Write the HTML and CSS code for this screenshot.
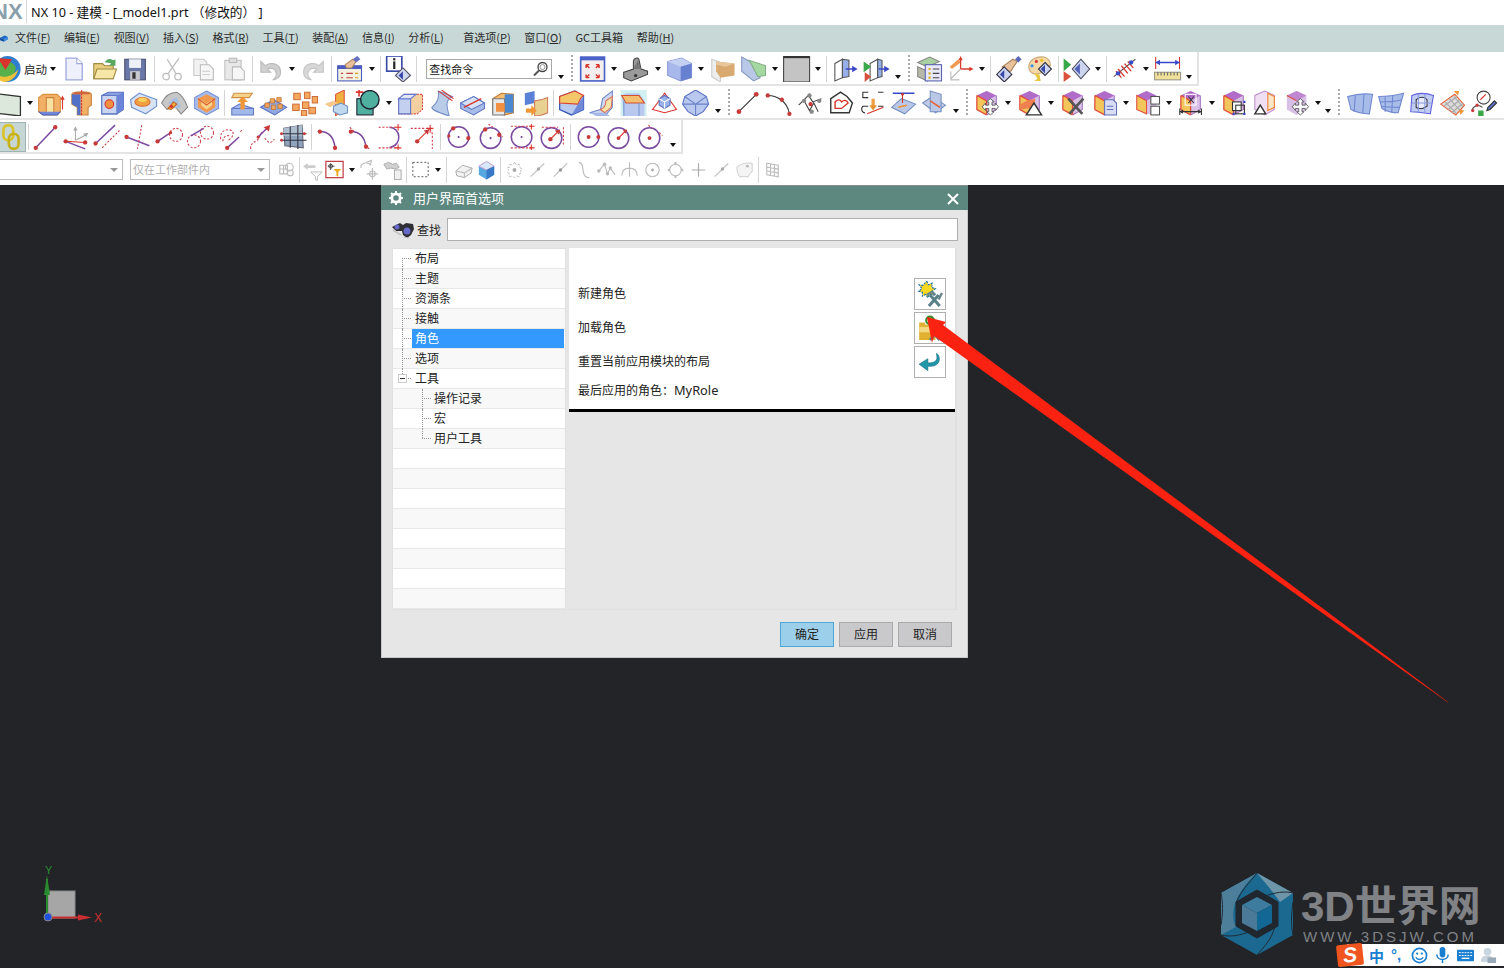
FILE: index.html
```html
<!DOCTYPE html>
<html lang="zh">
<head>
<meta charset="utf-8">
<title>NX 10 - 建模</title>
<link rel="stylesheet" href="styles.css">
</head>
<body>
<svg class="defs" aria-hidden="true">
<defs>
<g id="pcube"><path d="M12 1l9 4v13l-9 5-9-5V5z" fill="#d8bfe6"/><path d="M12 1l9 4-9 5-9-5z" fill="#b06cc8"/><path d="M3 5l9 5v13l-9-5z" fill="#f2c65a"/><path d="M3 5l9 5v13M3 5v13l9 5" fill="none" stroke="#e2503c" stroke-width="1.2"/><path d="M21 5v13l-9 5" fill="none" stroke="#a878c0"/></g>
<g id="mvx"><path d="M16 10v3h-3v-2l-3 3.500 3 3.500v-2h3v3h-2l3.500 3 3.500-3h-2v-3h3v2l3-3.500-3-3.500v2h-3v-3h2l-3.500-3-3.500 3z" fill="#fff" stroke="#555" stroke-width=".8"/></g>
</defs>
<symbol id="globe" viewBox="0 0 24 24"><circle cx="12" cy="12" r="12" fill="#2f7fd0"/><path d="M2 8c5-5 12-4 16 0 3 3 1 9-4 11-3 1-8 1-12-3z" fill="#58b04a"/><path d="M0 15c5 6 15 6 22-3-2 8-8 12-13 12-4 0-8-4-9-9z" fill="#f0c23a"/><path d="M3 2l13 1-6 10z" fill="#d8342c"/></symbol>
<symbol id="doc" viewBox="0 0 24 24"><path d="M5 2h10l5 5v15H5z" fill="#eef0fb" stroke="#a0a8dc" stroke-width="1.200"/><path d="M15 2v5h5" fill="#fff" stroke="#a0a8dc"/></symbol>
<symbol id="open" viewBox="0 0 24 24"><path d="M2 21V7h8l2 2h8v12z" fill="#e8cf80" stroke="#a08a40"/><path d="M2 21l3-9h18l-3 9z" fill="#f6e6a8" stroke="#a08a40"/><path d="M12 6c2-4 6-4 8-2l2-1v6h-6l2-2c-2-1-4-1-6-1z" fill="#58a860"/></symbol>
<symbol id="save" viewBox="0 0 24 24"><rect x="2" y="3" width="19" height="19" fill="#6a78a8" stroke="#4a5070"/><rect x="6" y="3" width="11" height="8" fill="#eef0f8"/><rect x="7" y="14" width="9" height="8" fill="#c8c8d0"/><rect x="9" y="15" width="3" height="6" fill="#333"/></symbol>
<symbol id="cut" viewBox="0 0 24 24"><path d="M7 3l8 13M18 2l-10 14" class="gl"/><circle cx="6" cy="19" r="3" class="gl"/><circle cx="17" cy="19" r="3" class="gl"/></symbol>
<symbol id="copy" viewBox="0 0 24 24"><path d="M3 3h9l3 3v12H3z" fill="#f2f2f2" stroke="#c8c8c8"/><path d="M9 8h8l4 4v10H9z" fill="#f6f6f6" stroke="#bbb"/><path d="M11 14h7M11 17h7" stroke="#ccc"/></symbol>
<symbol id="paste" viewBox="0 0 24 24"><rect x="3" y="4" width="15" height="18" fill="#e8e8e8" stroke="#c0c0c0"/><rect x="7" y="2" width="7" height="4" fill="#ddd" stroke="#bbb"/><path d="M10 10h7l4 4v8H10z" fill="#f6f6f6" stroke="#bbb"/></symbol>
<symbol id="undo" viewBox="0 0 24 24"><path d="M3 5v10h9l-3-3c4-2 7 0 8 3 1 3-1 6-3 7 5 0 8-4 7-9-1-6-9-8-14-4L4 6z" fill="#d0d0d0" stroke="#bbb"/></symbol>
<symbol id="redo" viewBox="0 0 24 24"><path d="M21 5v10h-9l3-3c-4-2-7 0-8 3-1 3 1 6 3 7-5 0-8-4-7-9 1-6 9-8 14-4l3-3z" fill="#d8d8d8" stroke="#c4c4c4"/></symbol>
<symbol id="role" viewBox="0 0 24 24"><rect x="1" y="9" width="22" height="14" fill="#f2f0e0" stroke="#4a5cc0"/><rect x="1" y="9" width="22" height="3" fill="#4a5cc0"/><path d="M4 16h2M9 16h6M4 20h2M9 20h6" stroke="#c04040"/><path d="M17 16h3M17 20h3" stroke="#d8a020"/><path d="M8 8l7-5 3 2-4 6H9z" fill="#e8c09c" stroke="#b08860"/><path d="M15 3l4-3 3 3-4 3z" fill="#6870c0"/></symbol>
<symbol id="info" viewBox="0 0 24 24"><rect x="1" y="0" width="14" height="14" fill="#fff" stroke="#3848a8" stroke-width="1.500"/><rect x="7" y="2" width="2" height="2" fill="#222"/><rect x="7" y="5" width="2" height="7" fill="#222"/><path d="M16 11l7 7-7 6-7-6z" fill="#d0d8f0" stroke="#556"/><path d="M16 14v8l-4-4z" fill="#3848a8"/></symbol>
<symbol id="fit" viewBox="0 0 24 24"><rect x="1" y="1" width="22" height="22" fill="#f4efee" stroke="#4a62c8" stroke-width="1.500"/><rect x="1" y="1" width="22" height="3" fill="#4a62c8"/><path d="M6 8l3 3M6 8h3M6 8v3M18 8l-3 3M18 8h-3M18 8v3M6 20l3-3M6 20h3M6 20v-3M18 20l-3-3M18 20h-3M18 20v-3" stroke="#d8342c" stroke-width="1.300" fill="none"/></symbol>
<symbol id="shade" viewBox="0 0 24 24"><path d="M1 15l9-3V5c0-3 4-4 5-2l2 9 6 2v3L8 23l-7-3z" fill="#9a9a9a" stroke="#444"/><path d="M10 12l7 0-3-8" fill="#777"/><circle cx="12" cy="18" r="1.500" fill="#333"/></symbol>
<symbol id="cube" viewBox="0 0 24 24"><path d="M1 5l13-3 9 5v13l-10 3-12-5z" fill="#a8b8ea" stroke="#8a9ade"/><path d="M1 5l13-3 9 5-10 3z" fill="#c4d0f2"/><path d="M13 10l10-3v13l-10 3z" fill="#6880d0"/></symbol>
<symbol id="clip" viewBox="0 0 24 24"><path d="M2 3l8 3v18l-8-5z" fill="#ededed" stroke="#ccc"/><path d="M6 5l17 2v11l-13 2-4-6z" fill="#d8aa70"/><path d="M6 5l17 2-8 3-9-2z" fill="#e8c59a"/></symbol>
<symbol id="vw" viewBox="0 0 24 24"><path d="M1 1l9 5 8 14-6 3L1 14z" fill="#b8c8e6" stroke="#8898c0"/><path d="M8 4l15 5v9l-7 1z" fill="#a4d8a0" stroke="#88b088"/></symbol>
<symbol id="bg" viewBox="0 0 24 24"><rect x="0" y="0" width="24" height="24" fill="#c4c4c4" stroke="#444"/><rect x="0" y="0" width="24" height="2" fill="#333"/></symbol>
<symbol id="mv" viewBox="0 0 24 24"><path d="M3 7l7-4v17l-7 3z" fill="#fff" stroke="#555"/><path d="M10 3l6 1v15l-6 1z" fill="#98b0e8" stroke="#555"/><path d="M13 12h8" stroke="#3848c8" stroke-width="1.500"/><path d="M19 9l5 3-5 3z" fill="#3848c8"/></symbol>
<symbol id="mv2" viewBox="0 0 24 24"><path d="M6 7l7-4v17l-7 3z" fill="#fff" stroke="#555"/><path d="M13 3l4 1v15l-4 1z" fill="#98b0e8" stroke="#555"/><path d="M14 12h6" stroke="#3848c8" stroke-width="1.500"/><path d="M19 9l5 3-5 3z" fill="#3848c8"/><path d="M0 5l7 5-7 5z" fill="#38a848"/><path d="M1 15l6 4-6 5z" fill="#d8503c"/></symbol>
<symbol id="lay" viewBox="0 0 24 24"><path d="M1 6l11-5 9 4-11 5z" fill="#a8d0a0" stroke="#888"/><path d="M1 10l9 4v9l-9-4z" fill="#b8b8a8" stroke="#888"/><rect x="8" y="8" width="15" height="15" fill="#e8e8f8" stroke="#5a62b0"/><path d="M11 11h2v2h-2zM11 15h2v2h-2zM11 19h2v2h-2z" fill="#d8b020"/><path d="M15 12h6M15 16h6M15 20h6" stroke="#444"/></symbol>
<symbol id="wcs" viewBox="0 0 24 24"><path d="M2 10l8-7 2 3-8 6z" fill="#f09a50"/><path d="M12 12h10M12 12V3" stroke="#d83c30" stroke-width="1.200"/><path d="M12 12L3 21M3 14v8h8" stroke="#bbb" fill="none"/><path d="M20 10l4 2-4 2zM10 4l2-4 2 4z" fill="#d83c30"/></symbol>
<symbol id="hd" viewBox="0 0 24 24"><path d="M6 10l10-7 4 2-6 9H8z" fill="#e8c09c" stroke="#a8845c"/><path d="M18 3l3-3 3 3-3 3z" fill="#5a68b8"/><path d="M8 10l7 7-7 7-7-7z" fill="#ccd4f0" stroke="#334"/><path d="M8 13v8l-4-4z" fill="#3848a8"/></symbol>
<symbol id="pal" viewBox="0 0 24 24"><path d="M2 10C2 3 10 0 16 1c4 1 6 4 6 8-3 0-5 3-6 6l-4 1c-5 2-10-1-10-6z" fill="#f4d8a8" stroke="#c8a870"/><circle cx="9" cy="5" r="1.500" fill="#d84040"/><circle cx="14" cy="4" r="1.500" fill="#f0c020"/><circle cx="5" cy="9" r="1.500" fill="#3890e0"/><path d="M7 16l3 5-3 2h6l-1-6z" fill="#e8c840"/><path d="M17 6l6 6-6 6-6-6z" fill="#ccd4f0" stroke="#334"/><path d="M17 8v8l-4-4z" fill="#3848a8"/></symbol>
<symbol id="pl" viewBox="0 0 24 24"><path d="M0 2l7 6-7 6z" fill="#38a848"/><path d="M0 14l7 5-7 5z" fill="#d8503c"/><path d="M16 3l8 9-8 9-8-9z" fill="#ccd4f0" stroke="#445"/><path d="M15 7v10l-5-5z" fill="#5060b8"/></symbol>
<symbol id="ant" viewBox="0 0 24 24"><path d="M2 19L22 3" stroke="#555"/><path d="M6 12l6 7M9 9l6 7M12 7l6 7M15 5l5 6M4 14l5 6" stroke="#d8342c" stroke-width="1.200"/><circle cx="6" cy="16" r="2" fill="#3848c8"/><circle cx="18" cy="6" r="2" fill="#3848c8"/></symbol>
<symbol id="rul" viewBox="0 0 24 24"><path d="M1 1v11M23 1v11" stroke="#d8342c"/><path d="M1 6h22" stroke="#3848c8" stroke-width="1.300"/><path d="M1 6l4-2.500v5zM23 6l-4-2.500v5z" fill="#3848c8"/><rect x="0" y="15" width="24" height="7" fill="#f0e09a" stroke="#998"/><path d="M3 15v3M6 15v3M9 15v3M12 15v3M15 15v3M18 15v3M21 15v3" stroke="#666"/></symbol>
<symbol id="rect" viewBox="0 0 24 24"><path d="M-4 3l26 3v18L-4 21z" fill="#dce8dc" stroke="#333" stroke-width="1.200"/></symbol>
<symbol id="ext" viewBox="0 0 24 24"><path d="M1 7l4-3h13l3 3v13l-3 3H5l-4-3z" fill="#f2b066" stroke="#d8903c"/><path d="M8 7h7v14H8z" fill="#f8e0a0" stroke="#d08038"/><path d="M1 20l4 3h13l3-3" fill="#7088d8" stroke="#4a62c0"/><path d="M23 18V8" stroke="#d8342c"/><path d="M21 9l2-4 2 4z" fill="#d8342c"/></symbol>
<symbol id="rev" viewBox="0 0 24 24"><path d="M3 4c0-3 18-3 18 0v10l-3 2v7H8v-7l-5-3z" fill="#f2b066" stroke="#c8843c"/><path d="M3 4h8v19H8v-7l-5-3z" fill="#5070c8"/><path d="M12 0v24" stroke="#d8342c" stroke-dasharray="2 1"/><path d="M4 4c0-3 16-3 16 0" fill="#d06040"/></symbol>
<symbol id="hole" viewBox="0 0 24 24"><path d="M2 5l6-3h14v16l-6 4H2z" fill="#8aa0e0" stroke="#5a70c0"/><path d="M2 5h14v17H2z" fill="#c8d4f0" stroke="#6078c8"/><path d="M16 5l6-3v16l-6 4z" fill="#6a84d8"/><circle cx="9" cy="13" r="4" fill="#f09040" stroke="#d8342c"/></symbol>
<symbol id="boss" viewBox="0 0 24 24"><path d="M0 9l8-6 16 6v6l-10 7L1 16z" fill="#d8e4f6" stroke="#7898d0" stroke-width="1.200"/><ellipse cx="11" cy="11" rx="7" ry="4" fill="#f0a040" stroke="#d87030"/><ellipse cx="11" cy="9" rx="4" ry="2" fill="#f8d060"/></symbol>
<symbol id="wedge" viewBox="0 0 24 24"><path d="M0 12C3 6 8 2 14 2c4 2 8 8 10 14l-6 6-5-6-8 2z" fill="#c8c8c8" stroke="#888"/><path d="M6 12c3-3 5-5 8-5l4 9-5 1z" fill="#a8c0e0"/><path d="M6 17l5-6 3 2-5 5z" fill="#f0b040" stroke="#c86020"/><circle cx="9" cy="15" r="1.500" fill="#d8342c"/></symbol>
<symbol id="pad" viewBox="0 0 24 24"><path d="M12 1l11 6v10l-11 6L1 17V7z" fill="#a8bce8" stroke="#7890d8"/><path d="M4 8l8-4 8 4v8l-8 5-8-5z" fill="#f09a50"/><path d="M7 9l5 4 5-4v5l-5 4-5-4z" fill="#f8d488"/><path d="M4 8l8 6 8-6" fill="none" stroke="#d85030"/></symbol>
<symbol id="up" viewBox="0 0 24 24"><path d="M4 3h17l-3 4H2z" fill="#f4d28a" stroke="#d09048"/><path d="M2 17l7-4 13 4v6H2z" fill="#a0b8ea" stroke="#6078c8"/><path d="M2 17h20" stroke="#6078c8"/><path d="M10 18v-7H7l5-5 5 5h-3v7z" fill="#f09838"/></symbol>
<symbol id="emb" viewBox="0 0 24 24"><path d="M0 16l12-7 12 7-11 7z" fill="#90a8e0" stroke="#5a70c0"/><path d="M4 12h4v4H4zM9 8h4v4H9zM15 7h4v4h-4zM10 14h4v4h-4zM16 13h4v4h-4z" fill="#f0a860" stroke="#c07030" stroke-width=".7"/></symbol>
<symbol id="pat" viewBox="0 0 24 24"><g fill="#f4a860" stroke="#c86028" stroke-width=".8"><rect x="2" y="3" width="6" height="6"/><rect x="12" y="2" width="5" height="6"/><rect x="19" y="6" width="5" height="6"/><rect x="1" y="13" width="6" height="6"/><rect x="10" y="11" width="6" height="6"/><rect x="16" y="16" width="6" height="6"/><rect x="9" y="19" width="5" height="5"/></g></symbol>
<symbol id="cross" viewBox="0 0 24 24"><path d="M12 4l8-4v17l-8 7z" fill="#f0b040" stroke="#d8342c" stroke-width=".8"/><path d="M2 13l8-3 4 2-7 4z" fill="#f4c88a"/><path d="M10 15l7-3 6 3v6l-7 2-6-3z" fill="#c0d8ee" stroke="#7090c0"/></symbol>
<symbol id="uni" viewBox="0 0 24 24"><path d="M2 2h7M5 0v6" stroke="#d8342c" stroke-width="1.500"/><rect x="3" y="8" width="15" height="15" fill="#50b0a0" stroke="#223"/><circle cx="15" cy="9" r="8.500" fill="#50b0a0" stroke="#223" stroke-width="1.300"/></symbol>
<symbol id="trim" viewBox="0 0 24 24"><path d="M1 8l5-4h17v14l-5 4H1z" fill="#f4cfa0" stroke="#d05040" stroke-dasharray="2 1"/><path d="M1 8h11v14H1z" fill="#c4d0f0" stroke="#6078d0"/><path d="M1 8l5-4h11l-5 4z" fill="#e0e6f8" stroke="#6078d0"/></symbol>
<symbol id="spl" viewBox="0 0 24 24"><path d="M9 1l13 5c-6 3-6 7-3 18-9-3-16-5-16-8C8 12 10 7 9 1z" fill="#b8cce8" stroke="#7890c8"/><path d="M9 1l13 9M12 0l11 8" stroke="#d8342c" fill="none"/></symbol>
<symbol id="sli" viewBox="0 0 24 24"><path d="M1 12l12-6 10 6v5l-10 6-12-6z" fill="#a8bce8" stroke="#6078c8"/><path d="M1 12l10 6 12-6-10-6z" fill="#d8e2f6" stroke="#6078c8"/><path d="M4 16l16-8" stroke="#d8342c" stroke-width="1.200"/></symbol>
<symbol id="shl" viewBox="0 0 24 24"><path d="M2 8l8-5 11 1v17l-8 2-11-2z" fill="#f4c070" stroke="#c87830"/><path d="M13 4h8v17h-8z" fill="#4a88d0"/><path d="M2 8h11v15H2z" fill="#e8e8e8" stroke="#777"/><path d="M5 12h8v8H5z" fill="#f09040"/></symbol>
<symbol id="off" viewBox="0 0 24 24"><path d="M3 3l9-2v11l-9 2z" fill="#5a80d8"/><path d="M12 10c4 0 8-1 12-3v14c-4 2-8 3-12 3z" fill="#e8d090" stroke="#d08060"/><path d="M4 17h5v-3l5 5-5 5v-3H4z" fill="#f09838"/></symbol>
<symbol id="bl" viewBox="0 0 24 24"><path d="M1 6l14-5 8 5v12l-11 5-11-5z" fill="#b8caf0" stroke="#3a58b8" stroke-width="1.200"/><path d="M1 6l14-5 8 4c-3 2-4 5-5 8L1 12z" fill="#f4c86a" stroke="#d84030"/><path d="M18 13l5-7v12l-11 5z" fill="#7088d8"/></symbol>
<symbol id="cham" viewBox="0 0 24 24"><path d="M0 21l10-3 2-10 9-7v15l-6 7z" fill="#d0d8f0" stroke="#7088c8"/><path d="M10 18c4-1 5-5 5-8l6-4-1 10-6 5z" fill="#f6e4a8" stroke="#d87060"/><path d="M0 21h14l5 3H6z" fill="#a4b8ea"/></symbol>
<symbol id="fla" viewBox="0 0 24 24"><rect x="0" y="0" width="24" height="24" fill="#d0f0f2"/><path d="M1 5l4-2h12l5 7v14H3z" fill="#b8c8ee"/><path d="M1 5h16l5 7H5z" fill="#f4c070" stroke="#d05030"/><path d="M3 10v14M17 12v12" stroke="#7898d0"/></symbol>
<symbol id="pyr" viewBox="0 0 24 24"><path d="M12 3L1 18l11 3 11-3z" fill="#fff" stroke="#d8342c"/><path d="M7 8l5-3 5 3v6l-5 3-5-3z" fill="#9ab0e6" stroke="#5a70c0"/><path d="M12 11v6M7 8l5 3 5-3" stroke="#fff" fill="none"/></symbol>
<symbol id="dia" viewBox="0 0 24 24"><path d="M12 0l10 6 2 7-5 7-7 4-7-4-5-7 2-7z" fill="#b8c8ee" stroke="#5a70c0"/><path d="M2 6l10 7 10-7M12 13v11M0 13l12 0 12 0" fill="none" stroke="#6a80c8"/></symbol>
<symbol id="ln" viewBox="0 0 24 24"><path d="M4 20L20 4" stroke="#333"/><circle cx="4" cy="20" r="2.200" class="pt"/><circle cx="20" cy="4" r="2.200" class="pt"/></symbol>
<symbol id="arc" viewBox="0 0 24 24"><path d="M2 5c8 0 18 5 20 17" stroke="#333" fill="none"/><circle cx="2" cy="5" r="2" class="pt"/><circle cx="15" cy="9" r="2" class="pt"/><circle cx="22" cy="22" r="2" class="pt"/></symbol>
<symbol id="sp" viewBox="0 0 24 24"><path d="M1 14l9-9 4 6 8-3M6 10l5 9 4-7 4 8" stroke="#444" fill="none"/><circle cx="6" cy="10" r="2" fill="#888"/><circle cx="11" cy="5" r="2" fill="#888"/><circle cx="12" cy="13" r="2" class="pt"/><circle cx="20" cy="10" r="2" fill="#888"/><circle cx="13" cy="20" r="2" fill="#888"/></symbol>
<symbol id="cv" viewBox="0 0 24 24"><path d="M2 8l9-6 6 4 5 6-3 9H2z" fill="#fff" stroke="#333" stroke-width="1.300"/><path d="M6 11c3-3 5-2 6 0 2-2 5-2 6 1l-6 5H6z" fill="none" stroke="#d8342c" stroke-width="1.300"/></symbol>
<symbol id="br" viewBox="0 0 24 24"><path d="M8 2H3v5h5M8 15H3c-2 2-1 6 2 6M17 2h5M17 15h5" stroke="#333" fill="none"/><path d="M11 8v7h3v-7z" fill="#f0a040"/><path d="M9 14h7l-3.500 5z" fill="#e89030"/><path d="M7 22l15-6" stroke="#d8342c"/></symbol>
<symbol id="ss" viewBox="0 0 24 24"><path d="M1 16l9-8 13 5-10 9z" fill="#b8c8e6" stroke="#7890c0"/><path d="M2 3h20" stroke="#3848c8" stroke-width="1.300"/><path d="M11 3v9" stroke="#d8342c"/><circle cx="11" cy="4" r="1.300" class="pt"/><path d="M7 16l8-2" stroke="#f09030" stroke-width="1.500"/></symbol>
<symbol id="ss2" viewBox="0 0 24 24"><path d="M1 12l9-6 12 8-9 7z" fill="#c0cce8" stroke="#7890c0"/><path d="M8 1l10 3v16L8 20z" fill="#b8c8e6" stroke="#7890c0"/><path d="M8 10l9 6" stroke="#e86030" stroke-width="1.500"/></symbol>
<symbol id="c1" viewBox="0 0 24 24"><use href="#pcube"/><use href="#mvx" transform="translate(-2 1)"/></symbol>
<symbol id="c2" viewBox="0 0 24 24"><use href="#pcube"/><path d="M4 13c5-4 10-4 13-5v8l-13 2z" fill="#f08050"/><path d="M16 12l7 11H9z" fill="#fff" stroke="#333" stroke-width="1.300"/></symbol>
<symbol id="c3" viewBox="0 0 24 24"><use href="#pcube"/><path d="M8 8l13 14M22 8L9 22" stroke="#555" stroke-width="2.500"/></symbol>
<symbol id="c4" viewBox="0 0 24 24"><use href="#pcube"/><path d="M12 9h8l3 3v11H12z" fill="#d8dcf4" stroke="#6070b8"/><path d="M14 15h6M14 18h6" stroke="#6070b8"/></symbol>
<symbol id="c5" viewBox="0 0 24 24"><path d="M11 1l9 4v18l-9-1-9-4V5z" fill="#d8bfe6"/><path d="M11 1l9 4-9 5-9-5z" fill="#b06cc8"/><path d="M2 5l9 5v12l-9-4z" fill="#f2c65a" stroke="#e2503c"/><rect x="15" y="6" width="8" height="7" fill="#fff" stroke="#555"/><rect x="15" y="15" width="8" height="8" fill="#fff" stroke="#555"/></symbol>
<symbol id="c6" viewBox="0 0 24 24"><use href="#pcube"/><path d="M2 20h20" stroke="#333" stroke-width="1.300"/><path d="M2 17v6M22 17v6" stroke="#333"/><path d="M2 20l3-2v4zM22 20l-3-2v4z" fill="#333"/><path d="M10 6l5 6M15 6l-5 6" stroke="#333"/><rect x="7" y="4" width="10" height="10" fill="none" stroke="#fff"/></symbol>
<symbol id="c7" viewBox="0 0 24 24"><use href="#pcube"/><rect x="11" y="11" width="8" height="8" fill="#fff" stroke="#333"/><rect x="14" y="14" width="8" height="8" fill="none" stroke="#333"/><path d="M11 21h2v2h-2zM21 10h2v2h-2zM21 21h2v2h-2z" fill="#3848c8"/></symbol>
<symbol id="c8" viewBox="0 0 24 24"><path d="M12 1l9 4v13l-9 5-9-5V5z" fill="#f0dff2" stroke="#c090d0"/><path d="M15 3l6 3v10l-6 3z" fill="#f8e6c8" stroke="#f08030"/><path d="M8 14l5 8H3z" fill="#fff" stroke="#333" stroke-width="1.300"/></symbol>
<symbol id="c9" viewBox="0 0 24 24"><path d="M12 1l9 4v13l-9 5-9-5V5z" fill="#d8bfe6"/><path d="M12 1l9 4-9 5-9-5z" fill="#c088d0"/><path d="M3 5l9 5" stroke="#e2503c"/><use href="#mvx" transform="translate(-2 1)"/></symbol>
<symbol id="sf1" viewBox="0 0 24 24"><path d="M1 6c7-2 15-3 23-2l-3 18c-6 0-11-1-17-4z" fill="#a8bcea" stroke="#7088d0"/><path d="M8 5l-1 15M16 4l-1 17" stroke="#7088d0"/></symbol>
<symbol id="sf2" viewBox="0 0 24 24"><path d="M1 6c8 0 15-1 23-3l-5 18c-5 0-10-1-15-4z" fill="#a8bcea" stroke="#7088d0"/><path d="M7 6l0 14M14 5l-1 16M2 11c7 0 14 0 20-2M3 15c5 1 12 1 17 1" stroke="#7088d0" fill="none"/></symbol>
<symbol id="sf3" viewBox="0 0 24 24"><path d="M3 5c7-3 14-2 20 0l-3 17c-6-1-12-2-18-2z" fill="#c0ccf0" stroke="#6060e0"/><path d="M7 16V9c3-3 8-3 10 0v6l-4 2H9z" fill="#e8ecfa" stroke="#333"/><path d="M3 12h18M9 4v16M15 4v17" stroke="#8a98e0"/></symbol>
<symbol id="sf4" viewBox="0 0 24 24"><path d="M1 13L14 4l9 10-8 9z" fill="#dcdcdc" stroke="#e86030"/><path d="M5 11l11 11M9 8l10 11M13 6l9 10M4 15L16 6M8 18l11-9M11 21L22 12" stroke="#aaa"/><path d="M13 1l5 0-1 4zM18 18l5 1-4 4z" fill="#f09838"/></symbol>
<symbol id="sf5" viewBox="0 0 24 24"><circle cx="12" cy="7" r="6" fill="#fff" stroke="#444"/><path d="M9 9l5-5" stroke="#d8342c"/><path d="M16 16l6-6 2 2-6 6-3 1z" fill="#5a70c8" stroke="#333"/><path d="M1 19c2-5 6-6 10-3" stroke="#444" fill="none"/><circle cx="2" cy="19" r="1.500" class="pt"/><circle cx="6" cy="14" r="1.500" class="pt"/><path d="M7 19h5v5H7z" fill="#38a848"/></symbol>
<symbol id="link" viewBox="0 0 24 24"><rect x="5" y="1" width="9" height="14" rx="4.500" fill="none" stroke="#d8c428" stroke-width="2.400"/><rect x="10" y="9" width="9" height="14" rx="4.500" fill="none" stroke="#c8b018" stroke-width="2.400"/></symbol>
<symbol id="l1" viewBox="0 0 24 24"><path d="M3 22L21 3" class="pu"/><circle cx="3" cy="22" r="2" class="pt"/><circle cx="21" cy="3" r="2" class="pt"/></symbol>
<symbol id="l2" viewBox="0 0 24 24"><path d="M11 15V3M11 15l10-5" stroke="#aaa" fill="none"/><path d="M9 6l2-4 2 4zM18 9l5-1-2 4z" fill="#aaa"/><path d="M2 16l18 7" class="pu"/><path d="M2 16l18 1" stroke="#d8342c"/><circle cx="2" cy="16" r="2" class="pt"/><circle cx="20" cy="17" r="2" class="pt"/></symbol>
<symbol id="l3" viewBox="0 0 24 24"><path d="M1 18L19 1" class="pu"/><path d="M7 22L23 6" class="rd"/><circle cx="1" cy="18" r="2" class="pt"/></symbol>
<symbol id="l4" viewBox="0 0 24 24"><path d="M1 12l21 8" class="pu"/><path d="M15 1l-4 22" class="rd"/><circle cx="1" cy="12" r="2" class="pt"/></symbol>
<symbol id="l5" viewBox="0 0 24 24"><path d="M1 16L13 8" class="pu"/><circle cx="18" cy="10" r="6" class="rd"/><circle cx="1" cy="16" r="2" class="pt"/><circle cx="13" cy="8" r="1.500" class="pt"/></symbol>
<symbol id="l6" viewBox="0 0 24 24"><circle cx="6" cy="16" r="6" class="rd"/><circle cx="18" cy="8" r="6" class="rd"/><path d="M3 11L15 4" class="pu"/></symbol>
<symbol id="l7" viewBox="0 0 24 24"><path d="M2 14C1 6 8 4 12 6c4 3-1 9-4 9M20 7l3-2" class="rd"/><path d="M8 22l11-10" class="pu"/><path d="M4 16c0-4 3-6 7-5" class="rd"/><circle cx="8" cy="22" r="2" class="pt"/></symbol>
<symbol id="l8" viewBox="0 0 24 24"><path d="M1 23c0-7 5-6 7-9s2-6 5-7" class="rd"/><path d="M8 12l9-9" class="pu"/><path d="M14 13l4 4c2 1 5-3 5-3" class="rd"/><path d="M13 3l6-2-1 6z" class="pt"/><circle cx="8" cy="12" r="1.500" class="pt"/></symbol>
<symbol id="l9" viewBox="0 0 24 24"><path d="M3 4l17-3 1 21-17-2z" fill="#8fa4bc" stroke="#667"/><path d="M3 4l17-3v10H3z" fill="#aebecc"/><path d="M0 9h24M1 15h23M9 2v20M16 1v22" stroke="#334"/><circle cx="1" cy="9" r="1.300" class="pt"/><circle cx="1" cy="15" r="1.300" class="pt"/><circle cx="22" cy="9" r="1.300" class="pt"/></symbol>
<symbol id="a1" viewBox="0 0 24 24"><path d="M3 7c8 0 13 5 14 15" class="pu"/><circle cx="3" cy="7" r="2" class="pt"/><circle cx="17" cy="22" r="2" class="pt"/></symbol>
<symbol id="a2" viewBox="0 0 24 24"><path d="M3 7c8 0 13 5 14 15" class="pu"/><path d="M2 3l5 5M16 19l5 5" class="rd"/><circle cx="3" cy="7" r="2" class="pt"/><circle cx="17" cy="21" r="2" class="pt"/></symbol>
<symbol id="a3" viewBox="0 0 24 24"><path d="M10 3c10 0 13 16 0 19" class="pu"/><path d="M0 3h18M0 22h18" class="rd"/><path d="M18 0v6M15 3h6M18 19v6M15 22h6" stroke="#d8342c"/></symbol>
<symbol id="a4" viewBox="0 0 24 24"><path d="M1 4h15c3 0 5 3 5 6v13" class="rd"/><path d="M7 16l11-11" stroke="#d8342c"/><path d="M13 6l5-1-1 5z" class="pt"/><circle cx="7" cy="16" r="2" class="pt"/><path d="M19 1v7M16 4h6" stroke="#d8342c"/></symbol>
<symbol id="o1" viewBox="0 0 24 24"><circle cx="12" cy="12" r="9.500" class="pu"/><path d="M11 12h2M12 11v2" stroke="#7a4aa0"/><circle cx="7" cy="4" r="2" class="pt"/><circle cx="21" cy="13" r="2" class="pt"/><circle cx="3" cy="11" r="1.500" class="pt"/></symbol>
<symbol id="o2" viewBox="0 0 24 24"><circle cx="12" cy="13" r="9.500" class="pu"/><path d="M11 13h2M12 12v2" stroke="#7a4aa0"/><path d="M10 0l4 3M20 9l3 3" class="rd"/><circle cx="7" cy="5" r="2" class="pt"/><circle cx="20" cy="10" r="2" class="pt"/></symbol>
<symbol id="o3" viewBox="0 0 24 24"><circle cx="12" cy="12" r="9.500" class="pu"/><path d="M2 2h20M2 22h20" class="rd"/><path d="M11 12h2M12 11v2" stroke="#7a4aa0"/><path d="M21 0v5M19 2h5M21 19v5M19 22h5" stroke="#d8342c"/></symbol>
<symbol id="o4" viewBox="0 0 24 24"><circle cx="11" cy="13" r="9.500" class="pu"/><path d="M2 3h15M22 3v17" class="rd"/><path d="M10 14l8-8" stroke="#d8342c"/><circle cx="10" cy="14" r="2" class="pt"/><path d="M14 6l5-1-1 5z" class="pt"/></symbol>
<symbol id="o5" viewBox="0 0 24 24"><circle cx="12" cy="12" r="9.500" class="pu"/><circle cx="12" cy="12" r="1.800" class="pt"/><circle cx="21" cy="12" r="1.800" class="pt"/></symbol>
<symbol id="o6" viewBox="0 0 24 24"><circle cx="11" cy="13" r="9.500" class="pu"/><path d="M11 13l7-7" stroke="#d8342c"/><circle cx="11" cy="13" r="1.800" class="pt"/><path d="M15 6l4-1-1 4z" class="pt"/></symbol>
<symbol id="o7" viewBox="0 0 24 24"><circle cx="11" cy="13" r="9.500" class="pu"/><circle cx="11" cy="13" r="1.800" class="pt"/><path d="M10 1l3 3M20 8l3 3" class="rd"/></symbol>
<symbol id="q1" viewBox="0 0 24 24"><path d="M6 7h8v9H6zM6 11h8M10 7v9" class="gl"/><circle cx="16" cy="9" r="4" class="gl"/><circle cx="17" cy="15" r="3" class="gl"/></symbol>
<symbol id="q2" viewBox="0 0 24 24"><path d="M1 8l5-3v2h8v3H6v2z" fill="#ccc"/><path d="M9 14h12l-5 5v4l-2-1v-3z" fill="#fff" stroke="#bbb"/></symbol>
<symbol id="q3" viewBox="0 0 24 24"><rect x="3" y="3" width="18" height="17" fill="#fff" stroke="#c04048" stroke-width="1.300"/><path d="M8 5v7M5 8h7" stroke="#444"/><circle cx="8" cy="8" r="2" fill="none" stroke="#444"/><path d="M11 11h8l-3 3v5l-2-1v-4z" fill="#f0a820"/></symbol>
<symbol id="q4" viewBox="0 0 24 24"><path d="M3 10c0-6 8-7 10-3M13 7l1-5-5 2" class="gl"/><path d="M15 10v12M9 16h12" class="gl"/><circle cx="15" cy="16" r="3" class="gl"/></symbol>
<symbol id="q5" viewBox="0 0 24 24"><path d="M3 6l5-2 4 2 4-1 3 4-3 2-6-1-4 1z" fill="#d0d0d0" stroke="#aaa"/><rect x="14" y="12" width="7" height="10" fill="#f0f0f0" stroke="#aaa"/></symbol>
<symbol id="q6" viewBox="0 0 24 24"><rect x="4" y="4" width="16" height="15" fill="none" stroke="#555" stroke-dasharray="2 2"/></symbol>
<symbol id="q7" viewBox="0 0 24 24"><path d="M4 13l7-6 10 3-1 5-7 5-8-2z" fill="#f2f2f2" stroke="#aaa"/><path d="M4 13l9 2 8-5M13 15v5" class="gl"/></symbol>
<symbol id="q8" viewBox="0 0 24 24"><path d="M4 8l8-5 8 5v9l-8 5-8-5z" fill="#58a8e0"/><path d="M4 8l8-5 8 5-8 4z" fill="#d8e8f8" stroke="#c8a0d0"/><path d="M12 12l8-4v9l-8 5z" fill="#3878c8"/></symbol>
<symbol id="q9" viewBox="0 0 24 24"><path d="M12 4l2 3 3-1v3l3 2-2 2 2 2-3 1v3l-3-1-2 2-2-2-3 1v-3l-3-2 2-2-2-2 3-1V6l3 1z" fill="none" stroke="#bbb" stroke-dasharray="3 2"/><circle cx="12" cy="12" r="2" fill="#aaa"/></symbol>
<symbol id="qa" viewBox="0 0 24 24"><path d="M5 19L19 5" class="gl"/><circle cx="13" cy="11" r="1.800" fill="#aaa"/></symbol>
<symbol id="qb" viewBox="0 0 24 24"><path d="M5 19L19 5" class="gl"/><circle cx="12" cy="12" r="1.800" fill="#999"/></symbol>
<symbol id="qc" viewBox="0 0 24 24"><path d="M7 4c5 0 4 7 5 11 1 4 3 5 6 5" class="gl"/></symbol>
<symbol id="qd" viewBox="0 0 24 24"><path d="M4 13l6-7 3 10 3-6 5 7" class="gl"/><circle cx="4" cy="13" r="1.800" fill="#bbb"/><circle cx="10" cy="6" r="1.800" fill="#bbb"/><circle cx="13" cy="16" r="1.800" fill="#bbb"/><circle cx="16" cy="10" r="1.800" fill="#bbb"/></symbol>
<symbol id="qe" viewBox="0 0 24 24"><path d="M4 18C4 12 8 10 12 10s8 2 8 8M12 4v15" class="gl"/></symbol>
<symbol id="qf" viewBox="0 0 24 24"><circle cx="12" cy="12" r="7" class="gl"/><circle cx="12" cy="12" r="1.500" fill="#aaa"/></symbol>
<symbol id="qg" viewBox="0 0 24 24"><circle cx="12" cy="12" r="6" class="gl"/><circle cx="12" cy="5" r="1.300" fill="#bbb"/><circle cx="12" cy="19" r="1.300" fill="#bbb"/><circle cx="5" cy="12" r="1.300" fill="#bbb"/><circle cx="19" cy="12" r="1.300" fill="#bbb"/></symbol>
<symbol id="qh" viewBox="0 0 24 24"><path d="M12 5v14M5 12h14" stroke="#aaa" stroke-width="1.200"/></symbol>
<symbol id="qi" viewBox="0 0 24 24"><path d="M4 9c5-4 11-5 16-4v9c-2 1-3 2-4 5H7C5 17 4 12 4 9z" fill="#f4f4f4" stroke="#ccc"/><circle cx="15" cy="8" r="1.500" fill="#bbb"/></symbol>
<symbol id="qj" viewBox="0 0 24 24"><path d="M6 5l12 2v12L6 17zM6 9l12 2M6 13l12 2M10 6v12M14 6v13" class="gl"/></symbol>
</svg>

<div class="title">
  <span class="nx">NX</span>
  <span class="titletext">NX 10 - 建模 - [_model1.prt （修改的） ]</span>
</div>
<nav class="menu">
  <svg class="menuico" viewBox="0 0 10 12"><path d="M0 7l6-3 4 2-5 3z" fill="#1c66c8"/><path d="M0 7v3l5 2v-3z" fill="#1450a0"/><path d="M5 9v3l5-3V6z" fill="#3a8ae0"/></svg>
  <span>文件(<u>F</u>)</span><span>编辑(<u>E</u>)</span><span>视图(<u>V</u>)</span><span>插入(<u>S</u>)</span><span>格式(<u>R</u>)</span><span>工具(<u>T</u>)</span><span>装配(<u>A</u>)</span><span>信息(<u>I</u>)</span><span>分析(<u>L</u>)</span><span class="mgap">首选项(<u>P</u>)</span><span>窗口(<u>O</u>)</span><span>GC工具箱</span><span>帮助(<u>H</u>)</span>
</nav>

<div class="row">
  <div class="tb">
    <svg class="b first8"><use href="#globe"/></svg><span class="start">启动</span><i class="c c10"></i>
    <svg class="b"><use href="#doc"/></svg><svg class="b"><use href="#open"/></svg><svg class="b"><use href="#save"/></svg><i class="s"></i>
    <svg class="b"><use href="#cut"/></svg><svg class="b"><use href="#copy"/></svg><svg class="b"><use href="#paste"/></svg><i class="s"></i>
    <svg class="b"><use href="#undo"/></svg><i class="c"></i><svg class="b"><use href="#redo"/></svg><i class="s"></i>
    <svg class="b"><use href="#role"/></svg><i class="c"></i><i class="s"></i><svg class="b"><use href="#info"/></svg><i class="s"></i>
    <div class="cmd"><span>查找命令</span><svg class="mag" viewBox="0 0 16 16"><circle cx="10" cy="6" r="4.500" fill="#fff" stroke="#444" stroke-width="1.300"/><circle cx="10" cy="6" r="2.500" fill="none" stroke="#999"/><path d="M6.500 9.500L1.500 14.500" stroke="#555" stroke-width="2"/></svg></div>
    <i class="c low ml3"></i><i class="g gw"></i>
    <svg class="b"><use href="#fit"/></svg><i class="c"></i><svg class="b"><use href="#shade"/></svg><i class="c"></i><svg class="b"><use href="#cube"/></svg><i class="c"></i><svg class="b"><use href="#clip"/></svg><svg class="b"><use href="#vw"/></svg><i class="c"></i><svg class="b"><use href="#bg"/></svg><i class="c"></i><i class="s"></i>
    <svg class="b"><use href="#mv"/></svg><svg class="b"><use href="#mv2"/></svg><i class="c low"></i><i class="g gw"></i>
    <svg class="b"><use href="#lay"/></svg><svg class="b"><use href="#wcs"/></svg><i class="c"></i><i class="s"></i>
    <svg class="b"><use href="#hd"/></svg><svg class="b"><use href="#pal"/></svg><i class="s"></i>
    <svg class="b"><use href="#pl"/></svg><i class="c"></i><i class="s"></i>
    <svg class="b"><use href="#ant"/></svg><i class="c"></i><svg class="b"><use href="#rul"/></svg><i class="c low"></i><i class="endpad"></i>
  </div>
</div>

<div class="row">
  <div class="tb full">
    <svg class="b first6"><use href="#rect"/></svg><i class="c c9"></i>
    <svg class="b"><use href="#ext"/></svg><svg class="b"><use href="#rev"/></svg><svg class="b"><use href="#hole"/></svg><svg class="b"><use href="#boss"/></svg><svg class="b"><use href="#wedge"/></svg><svg class="b"><use href="#pad"/></svg><i class="s"></i>
    <svg class="b"><use href="#up"/></svg><svg class="b"><use href="#emb"/></svg><svg class="b"><use href="#pat"/></svg><svg class="b"><use href="#cross"/></svg><svg class="b"><use href="#uni"/></svg><i class="c"></i>
    <svg class="b"><use href="#trim"/></svg><svg class="b"><use href="#spl"/></svg><svg class="b"><use href="#sli"/></svg><svg class="b"><use href="#shl"/></svg><svg class="b"><use href="#off"/></svg><i class="s"></i>
    <svg class="b"><use href="#bl"/></svg><svg class="b"><use href="#cham"/></svg><svg class="b"><use href="#fla"/></svg><svg class="b"><use href="#pyr"/></svg><svg class="b"><use href="#dia"/></svg><i class="c low"></i><i class="g"></i>
    <svg class="b"><use href="#ln"/></svg><svg class="b"><use href="#arc"/></svg><svg class="b"><use href="#sp"/></svg><svg class="b"><use href="#cv"/></svg><svg class="b"><use href="#br"/></svg><svg class="b"><use href="#ss"/></svg><svg class="b"><use href="#ss2"/></svg><i class="c low"></i><i class="g"></i>
    <svg class="b"><use href="#c1"/></svg><i class="c"></i><svg class="b"><use href="#c2"/></svg><i class="c"></i><svg class="b"><use href="#c3"/></svg><svg class="b"><use href="#c4"/></svg><i class="c"></i><svg class="b"><use href="#c5"/></svg><i class="c"></i><svg class="b"><use href="#c6"/></svg><i class="c"></i><svg class="b"><use href="#c7"/></svg><svg class="b"><use href="#c8"/></svg><svg class="b"><use href="#c9"/></svg><i class="c"></i><i class="c low c8"></i><i class="g gww"></i>
    <svg class="b"><use href="#sf1"/></svg><svg class="b"><use href="#sf2"/></svg><svg class="b"><use href="#sf3"/></svg><svg class="b"><use href="#sf4"/></svg><svg class="b"><use href="#sf5"/></svg>
  </div>
</div>

<div class="row">
  <div class="tb">
    <span class="active first6"><svg class="linkic"><use href="#link"/></svg></span><i class="s s4"></i>
    <svg class="b b31"><use href="#l1"/></svg><svg class="b b31"><use href="#l2"/></svg><svg class="b b31"><use href="#l3"/></svg><svg class="b b31"><use href="#l4"/></svg><svg class="b b31"><use href="#l5"/></svg><svg class="b b31"><use href="#l6"/></svg><svg class="b b31"><use href="#l7"/></svg><svg class="b b31"><use href="#l8"/></svg><svg class="b b31"><use href="#l9"/></svg><i class="s"></i>
    <svg class="b"><use href="#a1"/></svg><svg class="b"><use href="#a2"/></svg><svg class="b"><use href="#a3"/></svg><svg class="b"><use href="#a4"/></svg><i class="s"></i>
    <svg class="b"><use href="#o1"/></svg><svg class="b"><use href="#o2"/></svg><svg class="b"><use href="#o3"/></svg><svg class="b"><use href="#o4"/></svg><i class="s"></i>
    <svg class="b"><use href="#o5"/></svg><svg class="b"><use href="#o6"/></svg><svg class="b"><use href="#o7"/></svg><i class="c low"></i><i class="endpad"></i>
  </div>
</div>

<div class="row4">
  <div class="sel sel1"></div>
  <div class="sel sel2"><span>仅在工作部件内</span></div>
  <svg class="n"><use href="#q1"/></svg><i class="s"></i>
  <svg class="n"><use href="#q2"/></svg><svg class="n m2"><use href="#q3"/></svg><i class="c"></i><svg class="n"><use href="#q4"/></svg><svg class="n"><use href="#q5"/></svg><i class="s"></i>
  <svg class="n"><use href="#q6"/></svg><i class="c"></i><i class="s s8"></i>
  <svg class="n"><use href="#q7"/></svg><svg class="n"><use href="#q8"/></svg><i class="s"></i>
  <svg class="n"><use href="#q9"/></svg><svg class="n"><use href="#qa"/></svg><svg class="n"><use href="#qb"/></svg><svg class="n"><use href="#qc"/></svg><svg class="n"><use href="#qd"/></svg><svg class="n"><use href="#qe"/></svg><svg class="n"><use href="#qf"/></svg><svg class="n"><use href="#qg"/></svg><svg class="n"><use href="#qh"/></svg><svg class="n"><use href="#qa"/></svg><svg class="n"><use href="#qi"/></svg><i class="s"></i>
  <svg class="n"><use href="#qj"/></svg>
</div>

<main class="view"></main>

<section class="dialog">
  <header class="dhead">
    <svg class="gear" viewBox="0 0 14 14"><circle cx="7" cy="7" r="4.200" fill="none" stroke="#fff" stroke-width="2.800"/><path d="M7 0v2.500M7 11.500V14M0 7h2.500M11.500 7H14M2 2l1.800 1.800M10.200 10.200L12 12M12 2l-1.800 1.800M3.800 10.200L2 12" stroke="#fff" stroke-width="2"/></svg>
    <span class="dtitle">用户界面首选项</span>
    <svg class="close" viewBox="0 0 12 12"><path d="M1 1l10 10M11 1L1 11" stroke="#fff" stroke-width="2"/></svg>
  </header>
  <div class="dsearch">
    <svg class="bino" viewBox="0 0 22 18"><path d="M0 6l8-4 3 2 3-2 7 1 1 5-3 6-4 3-4-3-1-4-6 0z" fill="#2e2e34"/><circle cx="5" cy="6" r="2.500" fill="#6868c8"/><circle cx="15" cy="10" r="3.500" fill="#6868c8"/><path d="M1 9l8 5" stroke="#c4c4c4" stroke-width="2"/><path d="M12 16l5 1" stroke="#bbb"/></svg>
    <span>查找</span>
    <div class="dinput"></div>
  </div>
  <div class="dmain">
    <ul class="tree">
      <li class="t l1 first"><span>布局</span></li>
      <li class="t l1"><span>主题</span></li>
      <li class="t l1"><span>资源条</span></li>
      <li class="t l1"><span>接触</span></li>
      <li class="t l1 sel-row"><span>角色</span></li>
      <li class="t l1"><span>选项</span></li>
      <li class="t l1 last"><b class="minus"></b><span>工具</span></li>
      <li class="t l2"><span>操作记录</span></li>
      <li class="t l2"><span>宏</span></li>
      <li class="t l2 last"><span>用户工具</span></li>
      <li class="t"></li><li class="t"></li><li class="t"></li><li class="t"></li><li class="t"></li><li class="t"></li><li class="t"></li><li class="t"></li>
    </ul>
    <div class="pane">
      <div class="pane-top">
        <div class="opt"><span>新建角色</span><button class="ib"><svg viewBox="0 0 24 24"><path d="M9 0l1.500 3.500 3.500-1.500-.5 4 3.500 1-3 2.500 1 3.500-3.500-.5-1.500 3-2-3-3 1.500 0-3.500-3.500-1 3-2.500L2 3.500l3.500.5z" fill="#f8d820" stroke="#1c6ca8" stroke-dasharray="2 1"/><path d="M11 23l9-10M21 23l-9-10" stroke="#5a808a" stroke-width="2.800"/><path d="M9 13l5-3 3 3M23 11l-3 6" stroke="#66848c" stroke-width="2.200" fill="none"/></svg></button></div>
        <div class="opt"><span>加载角色</span><button class="ib"><svg viewBox="0 0 24 24"><path d="M2 10V7h5l1 2h9v14H2z" fill="#e0b030"/><path d="M2 11h15v5H2z" fill="#f4d880"/><circle cx="12" cy="5" r="3.500" fill="none" stroke="#3a8a28" stroke-width="2"/><path d="M12 23l8-9M21 23l-8-9" stroke="#5a808a" stroke-width="2.800"/></svg></button></div>
        <div class="opt"><span>重置当前应用模块的布局</span><button class="ib"><svg viewBox="0 0 24 24"><path d="M18 4c3 2 3 6 2 8-2 4-6 4-10 4v4l-8-6 8-5v4c4 0 7-1 8-3 1-2 0-4 0-6z" fill="#1c98a8" stroke="#1c6c88" stroke-width=".6"/></svg></button></div>
        <div class="opt lastopt"><span>最后应用的角色：<em class="lat">MyRole</em></span></div>
      </div>
    </div>
  </div>
  <footer class="dfoot">
    <button class="btn ok">确定</button><button class="btn">应用</button><button class="btn">取消</button>
  </footer>
</section>

<svg class="arrow" viewBox="0 0 600 420"><polygon points="7,7 26,12 23,15 528,392 528,392.600 14,26 12,33" fill="#fb2211"/></svg>

<svg class="triad" viewBox="0 0 70 70"><rect x="8" y="26" width="27" height="27" fill="#a6a6a6" stroke="#8a8a8a"/><path d="M7 53V14" stroke="#2a8a30" stroke-width="2"/><path d="M4 30l3-20 3 20z" fill="#2a8a30"/><path d="M7 52.500h40" stroke="#c83030" stroke-width="2"/><path d="M38 49.500l14 3-14 3z" fill="#c83030"/><circle cx="8" cy="52" r="4" fill="#2050e0" stroke="#888"/><text x="5" y="9" class="ty">Y</text><text x="54" y="57" class="tx">X</text></svg>

<div class="mark">
  <svg class="hex" viewBox="0 0 74 84"><path d="M37 1L73 21 73 63 37 83 1 63 1 21z" fill="#1b6890"/><path d="M37 1L1 21 1 63 16 55C8 38 18 18 37 1z" fill="#4d7f9a"/><path d="M37 1L73 21 60 30C52 18 44 10 37 1z" fill="#6e95a8"/><path d="M37 1c-6 8-15 16-21 30M73 21c-8-2-18-1-30 4M73 63c-2-9-2-19 0-33M37 83c7-8 14-15 18-28M1 63c9 2 18 1 30-4M1 21c2 10 2 20 0 32" fill="none" stroke="#202a33" stroke-width="1"/><path d="M37 18L58 30 58 54 37 66 16 54 16 30z" fill="#20272e" stroke="#20272e"/><path d="M37 25L52 33 37 41 22 33z" fill="#3d7c9e"/><path d="M22 33L37 41 37 59 22 51z" fill="#4a7a98"/><path d="M52 33L37 41 37 59 52 51z" fill="#126794"/></svg>
  <div class="marktext"><div class="mk1">3D世界网</div><div class="mk2">WWW.3DSJW.COM</div></div>
</div>

<div class="ime">
  <span class="sogou">S</span>
  <span class="zh">中</span>
  <span class="punc">°,</span>
  <svg class="imeic" viewBox="0 0 18 18"><circle cx="9" cy="9" r="7.500" fill="none" stroke="#1a7fd0" stroke-width="1.800"/><circle cx="6.500" cy="7" r="1.200" fill="#1a7fd0"/><circle cx="11.500" cy="7" r="1.200" fill="#1a7fd0"/><path d="M5 11c2 3 6 3 8 0" fill="none" stroke="#1a7fd0" stroke-width="1.500"/></svg>
  <svg class="imeic" viewBox="0 0 18 18"><rect x="6" y="0" width="6" height="11" rx="3" fill="#1a7fd0"/><path d="M3 8c0 7 12 7 12 0M9 13v4" fill="none" stroke="#1a7fd0" stroke-width="1.600"/></svg>
  <svg class="imeic" viewBox="0 0 18 18"><rect x="0" y="3" width="18" height="12" rx="1" fill="#1a7fd0"/><path d="M2 6h14M2 9h14" stroke="#fff" stroke-dasharray="2 1"/><path d="M5 12h8" stroke="#fff" stroke-width="1.500"/></svg>
  <svg class="imeic" viewBox="0 0 18 18"><circle cx="8" cy="5" r="4" fill="#c8d4de"/><path d="M1 16c0-6 3-7 7-7s6 2 6 7z" fill="#c8d4de"/><rect x="8" y="11" width="9" height="6" fill="#9aaab8"/></svg>
</div>
</body>
</html>
```

FILE: styles.css
```css
* { box-sizing: border-box; }
html, body { margin: 0; padding: 0; }
body {
  width: 1504px;
  height: 968px;
  overflow: hidden;
  position: relative;
  display: flex;
  flex-direction: column;
  background: #232428;
  font: 12px "Noto Sans CJK SC", "Noto Sans", sans-serif;
  color: #222;
}
.defs { position: absolute; width: 0; height: 0; }
.gl { fill: none; stroke: #bdbdbd; stroke-width: 1.2; }
.pt { fill: #c83a3a; }
.pu { fill: none; stroke: #7a4aa0; stroke-width: 1.4; }
.rd { fill: none; stroke: #d04050; stroke-width: 1; stroke-dasharray: 2 1.5; }

.title {
  height: 25px;
  flex: none;
  background: #fff;
  display: flex;
  align-items: center;
  overflow: hidden;
  padding-bottom: 2px;
}
.nx {
  width: 35px;
  margin-left: -8px;
  flex: none;
  border-right: 1px solid #d8d8d8;
  font: bold 22px/23px "Liberation Sans", sans-serif;
  color: #8aa0ac;
  overflow: hidden;
  white-space: nowrap;
}
.titletext { margin-left: 4px; font: 12.7px "Noto Sans", "Noto Sans CJK SC", sans-serif; color: #111; white-space: nowrap; }

.menu {
  height: 27px;
  flex: none;
  background: #c8d8d6;
  display: flex;
  align-items: center;
  gap: 13.6px;
  padding-bottom: 3px;
  font-size: 11px;
  color: #2a2a2a;
  white-space: nowrap;
}
.menu u { text-underline-offset: 1px; }
.menuico { width: 8px; height: 12px; margin-right: -6.6px; flex: none; }
.mgap { margin-left: 6px; }

.row { height: 34px; flex: none; background: #fff; }
.tb {
  height: 34px;
  width: fit-content;
  padding-top: 2px;
  display: flex;
  align-items: center;
  border-bottom: 2px solid #e4e4e4;
  border-right: 2px solid #e4e4e4;
  overflow: hidden;
}
.tb.full { width: 1504px; border-right: 0; }
.b { width: 31.2px; height: 26px; flex: none; }
.b31 { width: 31px; }
.first8 { margin-left: -7.6px; }
.first6 { margin-left: -5.6px; }
.start { width: 24px; margin-left: .4px; flex: none; font-size: 11.5px; white-space: nowrap; }
.c { width: 12px; height: 26px; flex: none; position: relative; display: block; }
.c::after {
  content: "";
  position: absolute;
  left: calc(50% - 3px);
  top: 11px;
  border: 3px solid transparent;
  border-top: 4px solid #111;
  border-bottom: 0;
}
.c.low::after { top: 19px; }
.c10 { width: 10px; }
.c9 { width: 9px; }
.c8 { width: 8px; }
.ml3 { margin-left: 3px; }
.s { width: 5px; height: 26px; flex: none; display: block; position: relative; }
.s::after { content: ""; position: absolute; left: 2px; top: 0; bottom: 0; width: 1px; background: #d4d4d4; }
.s4 { width: 4px; }
.s8 { width: 8px; }
.g {
  width: 8.6px;
  height: 28px;
  flex: none;
  display: block;
  background: repeating-linear-gradient(#aaa 0 2px, transparent 2px 4px) 4px 0 / 2px 100% no-repeat;
}
.gw { width: 10px; }
.gww { width: 12px; background-position: 6px 0; }
.endpad { width: 2px; flex: none; display: block; }
.cmd {
  width: 126px;
  height: 20px;
  margin-left: 7.4px;
  flex: none;
  display: flex;
  align-items: center;
  justify-content: space-between;
  padding: 0 2px;
  border: 1px solid #a8a8a8;
  font-size: 11px;
  color: #111;
}
.mag { width: 17px; height: 16px; }
.active {
  width: 31.2px;
  height: 30px;
  flex: none;
  display: flex;
  justify-content: center;
  align-items: center;
  background: #c6d6d4;
  border: 1px solid #9fb4b2;
  padding-left: 1px;
}
.linkic { width: 26px; height: 28px; }

.row4 {
  height: 31px;
  flex: none;
  background: #fff;
  display: flex;
  align-items: center;
}
.n { width: 23px; height: 24px; flex: none; }
.m2 { margin-left: -2px; }
.sel {
  height: 21px;
  flex: none;
  border: 1px solid #bdbdbd;
  position: relative;
  font-size: 11px;
  color: #b0b0b0;
  padding: 2px;
  line-height: 15px;
}
.sel::after {
  content: "";
  position: absolute;
  right: 4px;
  top: 8px;
  border: 4px solid transparent;
  border-top: 4px solid #999;
  border-bottom: 0;
}
.sel1 { width: 123px; margin-right: 7px; border-left: 0; }
.sel2 { width: 140px; margin-right: 3.5px; }

.view { flex: 1; background: #232428; }

.dialog {
  position: absolute;
  left: 381px;
  top: 185px;
  width: 587px;
  height: 473px;
  background: #e6e6e6;
  border: 1px solid #c8c8c8;
  border-top: 0;
  display: flex;
  flex-direction: column;
}
.dhead {
  height: 25px;
  flex: none;
  margin: 0 -1px;
  padding: 0 0 2px 8px;
  background: #5c887f;
  border-top: 1px solid #8a8a8a;
  display: flex;
  align-items: center;
  color: #fff;
  font-size: 13px;
}
.gear { width: 14px; height: 14px; flex: none; margin-top: 2px; }
.dtitle { margin-left: 10px; flex: 1; }
.close { width: 12px; height: 12px; margin: 3px 9px 0 0; flex: none; }
.dsearch {
  height: 23px;
  margin: 8px 9px 7px 10px;
  flex: none;
  display: flex;
  align-items: center;
}
.bino { width: 22px; height: 18px; flex: none; }
.dsearch span { margin: -1px 0 0 3px; width: 24px; flex: none; }
.dinput { flex: 1; height: 23px; margin-left: 6px; background: #fff; border: 1px solid #b0b0b0; }
.dmain { height: 362px; margin: 0 9px 0 10px; flex: none; display: flex; gap: 3px; }

.tree {
  width: 174px;
  flex: none;
  margin: 0;
  padding: 0;
  list-style: none;
  background: #fff;
  border: 1px solid #e0e0e0;
}
.t {
  height: 20px;
  position: relative;
  display: flex;
  border-bottom: 1px solid #e8e8e8;
  line-height: 18px;
  white-space: nowrap;
}
.t:nth-child(even) { background: #f8f8f8; }
.t span { flex: 1; margin: 0 1px 0 19px; padding-left: 3px; }
.t.l2 span { margin-left: 38px; }
.sel-row span { background: #3399ff; color: #fff; }
.t.l1::before, .t.l2::before {
  content: "";
  position: absolute;
  left: 9px;
  top: 9px;
  width: 9px;
  border-top: 1px dotted #999;
}
.t.l1::after, .t.l2::after {
  content: "";
  position: absolute;
  left: 9px;
  top: 0;
  bottom: -1px;
  border-left: 1px dotted #999;
}
.t.l2::before { left: 29px; width: 9px; }
.t.l2::after { left: 29px; }
.t.first::after { top: 9px; }
.t.last::after { bottom: 10px; }
.minus {
  position: absolute;
  left: 5px;
  top: 5px;
  width: 9px;
  height: 9px;
  background: linear-gradient(#333, #333) center / 5px 1px no-repeat #fff;
  border: 1px solid #ccc;
  z-index: 1;
}

.pane { width: 388px; flex: none; border: 1px solid #e0e0e0; border-width: 0 2px 1px 0; }
.pane-top {
  height: 164px;
  background: #fff;
  padding: 30px 9px 0 9px;
  border-bottom: 3px solid #000;
  display: flex;
  flex-direction: column;
  gap: 2px;
}
.opt { height: 32px; flex: none; display: flex; align-items: center; justify-content: space-between; }
.opt span { margin-top: -4px; }
.lastopt { height: 24px; }
.lat { font: 12.8px "Noto Sans", sans-serif; }
.ib {
  width: 32px;
  height: 32px;
  padding: 2px;
  background: #fff;
  border: 1px solid #b0b0b0;
}
.ib svg { width: 26px; height: 26px; display: block; }

.dfoot { flex: 1; display: flex; justify-content: flex-end; align-items: flex-start; gap: 5px; padding: 12px 15px 0 0; }
.btn {
  width: 54px;
  height: 25px;
  padding: 0 0 2px;
  background: #c9c9cc;
  border: 1px solid #a9a9a9;
  font: 12px "Noto Sans CJK SC", sans-serif;
  color: #222;
}
.ok { background: #9ccfe9; border-color: #4da7d8; }

.arrow { position: absolute; left: 920px; top: 310px; width: 600px; height: 420px; }
.triad { position: absolute; left: 40px; top: 865px; width: 70px; height: 70px; overflow: visible; }
.ty { font: 11px "Liberation Sans", sans-serif; fill: #2a8a30; }
.tx { font: 12px "Liberation Sans", sans-serif; fill: #c83030; }

.mark { position: absolute; left: 1220px; top: 872px; display: flex; align-items: flex-start; gap: 7px; }
.hex { width: 74px; height: 84px; flex: none; }
.marktext { color: #808285; white-space: nowrap; }
.mk1 { font: bold 42px/46px "Liberation Sans", "Noto Sans CJK SC", sans-serif; margin-top: 12px; }
.mk2 { font: 15px/14px "Liberation Sans", sans-serif; letter-spacing: 3px; margin-top: 0; margin-left: 2px; }

.ime {
  position: absolute;
  left: 1347px;
  top: 944px;
  width: 157px;
  height: 22px;
  background: #fff;
  display: flex;
  align-items: center;
  padding-left: 22px;
  gap: 6px;
}
.sogou {
  position: absolute;
  left: -10px;
  top: 0;
  width: 26px;
  height: 22px;
  background: #f0551f;
  transform: rotate(-6deg);
  border-radius: 2px;
  color: #fff;
  font: italic bold 21px/22px "Liberation Sans", sans-serif;
  text-align: center;
}
.zh { font: bold 15px "Noto Sans CJK SC", sans-serif; color: #1a7fd0; }
.punc { font: bold 15px "Liberation Sans", sans-serif; color: #1a7fd0; width: 14px; margin-left: 1px; line-height: 14px; }
.imeic { width: 17px; height: 17px; flex: none; }
```
